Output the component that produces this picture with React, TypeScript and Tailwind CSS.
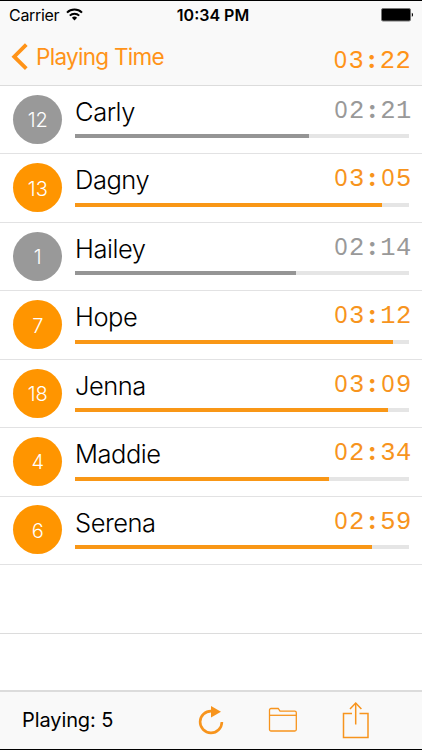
import clsx from 'clsx'

type Player = {
  number: number
  name: string
  time: string
  progress: number
  playing: boolean
}

const players: Player[] = [
  { number: 12, name: 'Carly', time: '02:21', progress: 70, playing: false },
  { number: 13, name: 'Dagny', time: '03:05', progress: 92, playing: true },
  { number: 1, name: 'Hailey', time: '02:14', progress: 66.3, playing: false },
  { number: 7, name: 'Hope', time: '03:12', progress: 95.3, playing: true },
  { number: 18, name: 'Jenna', time: '03:09', progress: 93.8, playing: true },
  { number: 4, name: 'Maddie', time: '02:34', progress: 76.2, playing: true },
  { number: 6, name: 'Serena', time: '02:59', progress: 89.1, playing: true },
]

// Fixed-pitch clock. The mono face has a dotted zero, so zeros come from a sans one.
function Clock({ time, className }: { time: string; className?: string }) {
  return (
    <div className={clsx('flex h-[30px] items-baseline leading-[30px]', className)}>
      {time.split('').map((c, i) => (
        <span
          key={i}
          className={clsx(
            'block w-[15.7px] text-center',
            c === '0' && "font-['Noto_Sans',sans-serif] text-[23.5px]",
            c === ':' && "font-['Inter',sans-serif] text-[24px] font-extrabold",
            c !== '0' && c !== ':' && "font-['Liberation_Mono',monospace] text-[25.5px]"
          )}
        >
          {c}
        </span>
      ))}
    </div>
  )
}

function StatusBar() {
  return (
    <div className="flex h-[28px] items-center pb-px pl-[9px] pr-[8px] text-black">
      <div className="flex w-[150px] items-center gap-[7px] text-[16px] tracking-[-0.3px]">
        Carrier
        <svg width="17" height="13" viewBox="0 0 17 13" fill="none" stroke="#000" strokeWidth="2">
          <path d="M1 4.6a10.8 10.8 0 0 1 15 0" />
          <path d="M3.8 7.6a6.8 6.8 0 0 1 9.4 0" />
          <path d="M8.5 12.4 5.9 9.7a3.8 3.8 0 0 1 5.2 0z" fill="#000" stroke="none" />
        </svg>
      </div>
      <div className="flex-1 pl-[3px] text-center text-[16px] font-semibold">10:34 PM</div>
      <div className="flex w-[150px] justify-end">
        <svg width="33" height="14" viewBox="0 0 33 14">
          <rect x="0.5" y="0.5" width="29" height="12.5" rx="1.5" fill="#000" stroke="#777" />
          <path d="M30.8 4.7c1.6.5 1.6 3.6 0 4.1z" fill="#000" />
        </svg>
      </div>
    </div>
  )
}

function PlayerRow({ player }: { player: Player }) {
  return (
    <div className="flex h-[68.45px] border-b border-[#e2e2e3] pl-[13.3px] pr-[13.5px]">
      <div
        className={clsx(
          'mt-[8.8px] flex h-[49px] w-[49px] shrink-0 items-center justify-center rounded-full pt-[2px] text-[20px] font-light text-white',
          player.playing ? 'bg-[#ff9500]' : 'bg-[#999999]'
        )}
      >
        {player.number}
      </div>
      <div className="ml-[13px] flex-1">
        <div className="flex h-[48.4px] justify-between">
          <div className="-ml-[0.2px] mt-[8px] text-[25.5px] font-light leading-[36px] tracking-[-0.5px] text-black">{player.name}</div>
          <Clock time={player.time} className={clsx('-mr-[3px] mt-[8px]', player.playing ? 'text-[#f7941d]' : 'text-[#999999]')} />
        </div>
        <div className="h-[4px] bg-[#e5e5e5]">
          <div
            className={clsx('h-full', player.playing ? 'bg-[#f99716]' : 'bg-[#959595]')}
            style={{ width: `${player.progress}%` }}
          />
        </div>
      </div>
    </div>
  )
}

export default function App() {
  return (
    <div className="flex h-[750px] w-[422px] flex-col overflow-hidden border-y border-black bg-white font-['Inter',sans-serif]">
      <header className="h-[85px] shrink-0 border-b border-[#dcdcdc] bg-[#f9f9f9]">
        <StatusBar />
        <div className="flex h-[56px] justify-between pl-[11px] pr-[11px] text-[#ff9318]">
          <div className="flex h-[56px] items-center gap-[8px]">
            <svg width="17" height="28" viewBox="0 0 17 28" fill="none" stroke="currentColor" strokeWidth="3.8">
              <path d="M15.3 1.6 3.2 13.7l12.1 12" />
            </svg>
            <span className="text-[22.5px] tracking-[-0.7px]">Playing Time</span>
          </div>
          <Clock time="03:22" className="mt-[15px]" />
        </div>
      </header>

      <main className="flex-1">
        {players.map(player => (
          <PlayerRow key={player.number} player={player} />
        ))}
        <div className="h-[68.45px] border-b border-[#dcdcdc]" />
      </main>

      <footer className="flex h-[59px] shrink-0 items-center border-t-2 border-[#dcdcdc] bg-[#f9f9f9] pb-[2px] pl-[22px] text-[#f7941d]">
        <div className="w-[176px] text-[20px] tracking-[-0.1px] text-black">Playing: 5</div>
        {/* Reset */}
        <svg width="26" height="30" viewBox="0 0 26 30" fill="none" className="shrink-0">
          <path d="M13.5 6.1A10.9 10.9 0 1 0 23.9 17" stroke="currentColor" strokeWidth="2.6" />
          <path d="M13 1v11.6l10-5.8z" fill="currentColor" />
        </svg>
        {/* Files */}
        <svg width="29" height="26" viewBox="0 0 29 26" fill="none" stroke="currentColor" strokeWidth="1.3" className="ml-[44px] shrink-0">
          <path d="M1.5 22.5V3a1.5 1.5 0 0 1 1.5-1.5h7.2l1.8 2.7h14.8a1.5 1.5 0 0 1 1.5 1.5v16.8a1.5 1.5 0 0 1-1.5 1.5H3a1.5 1.5 0 0 1-1.5-1.5z" />
          <path d="M1.5 8.3h26.8" />
        </svg>
        {/* Share */}
        <svg width="28" height="38" viewBox="0 0 28 38" fill="none" stroke="currentColor" strokeWidth="1.5" className="ml-[45px] shrink-0">
          <path d="M10 12.5H1.5v24h24.5v-24h-8.5" />
          <path d="M13.7 23.5V2" />
          <path d="M8 8l5.7-6 5.7 6" />
        </svg>
      </footer>
    </div>
  )
}
